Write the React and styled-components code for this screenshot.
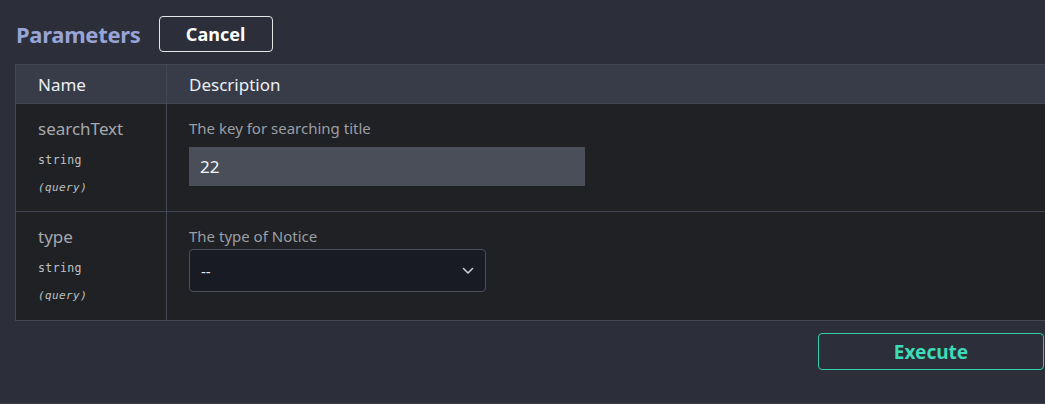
import React from 'react';
import styled, { createGlobalStyle } from 'styled-components';

const GlobalStyle = createGlobalStyle`
  html, body {
    margin: 0;
    padding: 0;
    background: #2c2f39;
  }
  * { box-sizing: border-box; }
`;

const Page = styled.div`
  width: 1045px;
  height: 404px;
  overflow: hidden;
  background: #2c2f39;
  border-bottom: 1px solid #3b3e48;
  font-family: 'Noto Sans', 'Open Sans', sans-serif;
  padding: 16px 0 0 15px;
`;

const TopBar = styled.div`
  display: flex;
  align-items: center;
  height: 36px;
  gap: 18px;
`;

const Heading = styled.h2`
  margin: 0 0 0 1px;
  font-size: 22px;
  font-weight: 700;
  color: #98a3d6;
  letter-spacing: -0.3px;
`;

const OutlineButton = styled.button`
  height: ${p => p.$height}px;
  width: ${p => p.$width}px;
  border: 1px solid ${p => p.$color};
  border-radius: 4px;
  background: transparent;
  color: ${p => p.$text};
  font-family: 'Noto Sans', sans-serif;
  font-weight: 700;
  font-size: ${p => p.$size}px;
  padding: 0;
  cursor: pointer;
`;

const Table = styled.div`
  margin-top: 12px;
  width: 1040px;
  border-top: 1px solid #434754;
  border-left: 1px solid #434754;
  border-bottom: 1px solid #434754;
`;

const Row = styled.div`
  display: grid;
  grid-template-columns: 150px 1fr;
  background: ${p => (p.$head ? '#383c48' : '#202125')};
  height: ${p => p.$h}px;
  & + & {
    border-top: 1px solid #434754;
  }
`;

const Cell = styled.div`
  padding: ${p => (p.$head ? '0 0 0 22px' : '13px 0 0 22px')};
  display: flex;
  flex-direction: column;
  justify-content: ${p => (p.$head ? 'center' : 'flex-start')};
  & + & {
    border-left: 1px solid #434754;
  }
`;

const HeadText = styled.span`
  font-size: 17px;
  color: #eceff4;
`;

const ParamName = styled.div`
  font-size: 17px;
  color: #a6a8ad;
  line-height: 24px;
`;

const ParamType = styled.div`
  font-family: 'DejaVu Sans Mono', 'Liberation Mono', monospace;
  color: #bfc1c6;
  line-height: 16px;
  margin-top: ${p => (p.$italic ? 12 : 11)}px;
  font-style: ${p => (p.$italic ? 'italic' : 'normal')};
  font-size: ${p => (p.$italic ? 11 : 11.5)}px;
  font-weight: 300;
  letter-spacing: 0.4px;
`;

const DescText = styled.div`
  font-size: 15px;
  color: #9b9ea4;
  line-height: 22px;
`;

const TextInput = styled.div`
  margin-top: 8px;
  width: 396px;
  height: 39px;
  background: #4a4e59;
  color: #f4f5f7;
  font-size: 17px;
  padding: 0 11px;
  display: flex;
  align-items: center;
`;

const Select = styled.div`
  margin-top: 2px;
  width: 297px;
  height: 43px;
  background: #181b24;
  border: 1px solid #4b505c;
  border-radius: 4px;
  color: #e6e8ec;
  font-size: 15px;
  padding: 0 11px;
  display: flex;
  align-items: center;
  justify-content: space-between;
`;

const Footer = styled.div`
  display: flex;
  justify-content: flex-end;
  margin-top: 12px;
  padding-right: 1px;
`;

const Chevron = () => (
  <svg width="12" height="8" viewBox="0 0 12 8" fill="none">
    <path d="M1.5 1.5 L6 6 L10.5 1.5" stroke="#c9ccd3" strokeWidth="1.6" strokeLinecap="round" strokeLinejoin="round" />
  </svg>
);

const ParamRow = ({ name, description, height, children }) => (
  <Row $h={height}>
    <Cell>
      <ParamName>{name}</ParamName>
      <ParamType>string</ParamType>
      <ParamType $italic>(query)</ParamType>
    </Cell>
    <Cell>
      <DescText>{description}</DescText>
      {children}
    </Cell>
  </Row>
);

export default function App() {
  return (
    <Page>
      <GlobalStyle />
      <TopBar>
        <Heading>Parameters</Heading>
        <OutlineButton $width={114} $height={36} $color="#e4e6ea" $text="#ffffff" $size={18}>Cancel</OutlineButton>
      </TopBar>
      <Table>
        <Row $head $h={38}>
          <Cell $head><HeadText>Name</HeadText></Cell>
          <Cell $head><HeadText>Description</HeadText></Cell>
        </Row>
        <ParamRow name="searchText" description="The key for searching title" height={108}>
          <TextInput>22</TextInput>
        </ParamRow>
        <ParamRow name="type" description="The type of Notice" height={109}>
          <Select>
            <span>--</span>
            <Chevron />
          </Select>
        </ParamRow>
      </Table>
      <Footer>
        <OutlineButton $width={226} $height={37} $color="#2fcfae" $text="#3ddbb7" $size={19}>Execute</OutlineButton>
      </Footer>
    </Page>
  );
}
